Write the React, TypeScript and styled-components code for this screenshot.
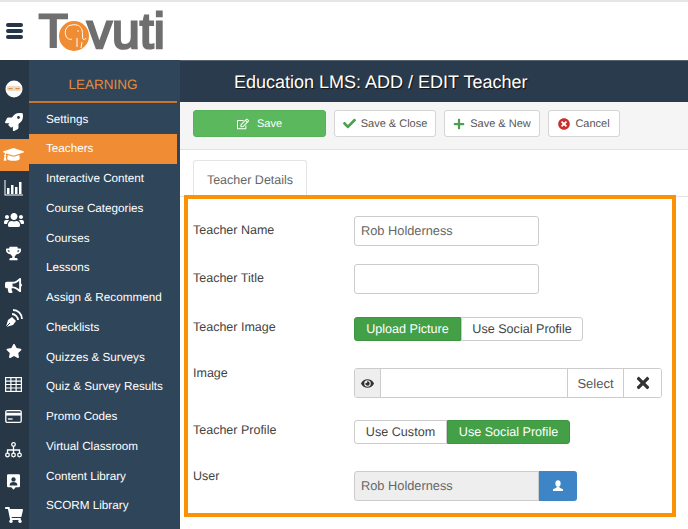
import React from "react";
import styled, { createGlobalStyle } from "styled-components";
import {
  FaRocket, FaGraduationCap, FaUsers, FaTrophy, FaBullhorn, FaStar,
  FaShoppingCart, FaCheck, FaPlus, FaTimes, FaTimesCircle, FaEye, FaRegEdit,
} from "react-icons/fa";

const Global = createGlobalStyle`
  html, body { margin: 0; padding: 0; background: #fff; overflow: hidden; }
  * { box-sizing: border-box; }
  body { font-family: "Liberation Sans", Arial, sans-serif; color: #555; text-rendering: geometricPrecision; }
`;

const Page = styled.div`
  width: 688px;
  height: 529px;
  display: flex;
  flex-direction: column;
  overflow: hidden;
`;
const Header = styled.header`
  height: 60px;
  flex: none;
  border-top: 2px solid #e6e6e6;
  display: flex;
  align-items: center;
  padding-left: 6px;
  background: #fff;
`;
const Burger = styled.div`
  width: 17px;
  height: 16px;
  display: flex;
  flex-direction: column;
  justify-content: space-between;
  span {
    height: 4px;
    border-radius: 2px;
    background: #24364a;
  }
`;
const Logo = styled.div`
  margin-left: 15px;
  display: flex;
  align-items: center;
  height: 40px;
  font-size: 50px;
  color: #6f6f6f;
  line-height: 40px;
`;
const LogoT = styled.span`
  font-weight: 700;
  letter-spacing: -1.5px;
`;
const LogoRest = styled.span`
  font-weight: 400;
  letter-spacing: 0;
  -webkit-text-stroke: 2.4px #6f6f6f;
`;
const LogoCircle = styled.svg`
  width: 30px;
  height: 30px;
  margin: 10px -2px 0 -8px;
  flex: none;
`;
const Body = styled.div`
  flex: 1;
  display: flex;
  min-height: 0;
`;
const Rail = styled.nav`
  width: 29px;
  flex: none;
  background: #273746;
  display: flex;
  flex-direction: column;
  align-items: center;
  padding-top: 13px;
`;
const RailItem = styled.div<{ $active?: boolean }>`
  width: 29px;
  height: 32.75px;
  flex: none;
  display: flex;
  align-items: center;
  justify-content: center;
  padding-right: 2px;
  color: #fff;
  font-size: 18px;
  background: ${(p) => (p.$active ? "#ef8c34" : "transparent")};
`;
const Nav = styled.nav`
  width: 151px;
  flex: none;
  background: #2f4559;
  display: flex;
  flex-direction: column;
`;
const NavTitle = styled.div`
  height: 43px;
  margin-right: 3px;
  border-bottom: 2px solid #c9742d;
  color: #e98a3a;
  font-size: 13.5px;
  text-align: center;
  line-height: 50px;
`;
const NavList = styled.div`
  padding-top: 1.5px;
  display: flex;
  flex-direction: column;
`;
const NavItem = styled.div<{ $active?: boolean }>`
  height: 29.75px;
  line-height: 29px;
  padding-left: 17px;
  margin-right: 3px;
  font-size: 11.7px;
  color: #fff;
  background: ${(p) => (p.$active ? "#ef8c34" : "transparent")};
`;
const Main = styled.main`
  flex: 1;
  min-width: 0;
  display: flex;
  flex-direction: column;
`;
const TitleBar = styled.div`
  height: 42px;
  flex: none;
  background: #2a3b4d;
  border-top: 1px solid #56636f;
  color: #fff;
  font-size: 18px;
  line-height: 42px;
  padding-left: 54px;
  text-shadow: 1px 1px 1px #111;
`;
const Toolbar = styled.div`
  height: 48px;
  flex: none;
  background: #f5f5f5;
  border-bottom: 1px solid #e2e2e2;
  display: flex;
  align-items: flex-start;
  gap: 8px;
  padding: 8px 0 0 13px;
`;
const ToolButton = styled.div<{ $primary?: boolean; $w: number }>`
  width: ${(p) => p.$w}px;
  height: 27px;
  border-radius: 3px;
  border: 1px solid ${(p) => (p.$primary ? "#57b05a" : "#d5d5d5")};
  background: ${(p) => (p.$primary ? "#5cb85c" : "#fff")};
  color: ${(p) => (p.$primary ? "#fff" : "#555")};
  font-size: 11px;
  display: flex;
  align-items: center;
  justify-content: center;
  gap: ${(p) => (p.$primary ? 8 : 5)}px;
  svg { flex: none; }
`;
const Tabs = styled.div`
  height: 47px;
  flex: none;
  padding: 10px 0 0 13px;
  border-bottom: 1px solid #e4e4e4;
`;
const Tab = styled.div`
  width: 114px;
  height: 37px;
  background: #fff;
  border: 1px solid #e4e4e4;
  border-bottom: none;
  border-radius: 3px 3px 0 0;
  font-size: 12.5px;
  color: #666;
  text-align: center;
  line-height: 38px;
`;
const FormBox = styled.section`
  position: relative;
  margin: -2px 0 0 4px;
  width: 492px;
  height: 322px;
  border: 4px solid #fb9205;
  background: #fff;
  padding: 17px 0 0 5px;
  display: flex;
  flex-direction: column;
`;
const Row = styled.div<{ $gap?: number }>`
  display: grid;
  grid-template-columns: 161px auto;
  justify-content: start;
  align-items: start;
  margin-top: ${(p) => p.$gap ?? 0}px;
`;
const Label = styled.label<{ $drop?: number }>`
  font-size: 12.5px;
  color: #444;
  line-height: 16px;
  margin-top: ${(p) => p.$drop ?? 0}px;
`;
const TextBox = styled.div<{ $disabled?: boolean }>`
  width: 185px;
  height: 30px;
  border: 1px solid #ccc;
  border-radius: ${(p) => (p.$disabled ? "3px 0 0 3px" : "3px")};
  background: ${(p) => (p.$disabled ? "#eee" : "#fff")};
  font-size: 12.8px;
  line-height: 28px;
  padding-left: 6px;
  color: #666;
`;
const Toggle = styled.div`
  display: flex;
  height: 24px;
`;
const ToggleButton = styled.div<{ $on?: boolean; $w: number; $side: "l" | "r" }>`
  width: ${(p) => p.$w}px;
  height: 24px;
  font-size: 12.6px;
  line-height: 23px;
  text-align: center;
  color: ${(p) => (p.$on ? "#fff" : "#444")};
  background: ${(p) => (p.$on ? "#43a047" : "#fff")};
  border: 1px solid ${(p) => (p.$on ? "#3d9441" : "#ccc")};
  border-radius: ${(p) => (p.$side === "l" ? "3px 0 0 3px" : "0 3px 3px 0")};
`;
const InputGroup = styled.div`
  display: flex;
  width: 308px;
  height: 30px;
  border: 1px solid #ccc;
  border-radius: 3px;
  overflow: hidden;
`;
const Addon = styled.div<{ $w: number; $grey?: boolean; $fill?: boolean }>`
  width: ${(p) => (p.$fill ? "auto" : `${p.$w}px`)};
  flex: ${(p) => (p.$fill ? 1 : "none")};
  background: ${(p) => (p.$grey ? "#eee" : "#fff")};
  border-right: 1px solid #ccc;
  display: flex;
  align-items: center;
  justify-content: center;
  font-size: 13px;
  color: #555;
  &:last-child { border-right: none; }
`;
const UserRow = styled.div`
  display: flex;
`;
const UserButton = styled.div`
  width: 38px;
  height: 30px;
  background: #3d85c6;
  border-radius: 0 3px 3px 0;
  display: flex;
  align-items: center;
  justify-content: center;
`;

const Ninja = () => (
  <svg width="18" height="18" viewBox="0 0 18 18">
    <circle cx="9" cy="9" r="8.500" fill="#fff" />
    <rect x="1.500" y="6" width="15" height="5" rx="2.500" fill="#ecdcc8" />
    <rect x="3.500" y="8" width="4" height="1.200" fill="#e58a36" />
    <rect x="10.500" y="8" width="4" height="1.200" fill="#e58a36" />
  </svg>
);
const BarsChart = () => (
  <svg width="19" height="16" viewBox="0 0 19 16" fill="#fff">
    <path d="M0.500 0v15.500H19v-1H1.500V0z" />
    <rect x="3" y="8" width="2.500" height="6" />
    <rect x="7" y="5" width="2.500" height="9" />
    <rect x="11" y="7" width="2.500" height="7" />
    <rect x="15" y="2" width="2.500" height="12" />
  </svg>
);
const PenSignal = () => (
  <svg width="18" height="19" viewBox="0 0 18 19" fill="none" stroke="#fff">
    <path d="M1 18l2-7 4-3 4 4-3 4z" fill="#fff" stroke="none" />
    <path d="M1 18l4-4" stroke="#273746" strokeWidth="1" />
    <path d="M7 5c3 0 6 3 6 6" strokeWidth="1.800" />
    <path d="M8 1c5 0 9 4 9 9" strokeWidth="1.800" />
  </svg>
);
const GridTable = () => (
  <svg width="17" height="15" viewBox="0 0 17 15" fill="none" stroke="#fff" strokeWidth="1.200">
    <rect x="0.600" y="0.600" width="15.800" height="13.800" fill="#273746" />
    <path d="M5.900 0.600v13.800M11.100 0.600v13.800M0.600 4.100h15.800M0.600 7.500h15.800M0.600 11h15.800" />
  </svg>
);
const Card = () => (
  <svg width="17" height="13" viewBox="0 0 18 14">
    <rect x="0.700" y="0.700" width="16.600" height="12.600" rx="1.500" fill="none" stroke="#fff" strokeWidth="1.400" />
    <rect x="1" y="3" width="16" height="3" fill="#fff" />
    <rect x="3" y="9" width="5" height="1.400" fill="#fff" />
  </svg>
);
const Sitemap = () => (
  <svg width="17" height="16" viewBox="0 0 17 16" fill="none" stroke="#fff" strokeWidth="1.300">
    <circle cx="8.500" cy="2.500" r="1.800" />
    <circle cx="2.500" cy="13" r="1.800" />
    <circle cx="8.500" cy="13" r="1.800" />
    <circle cx="14.500" cy="13" r="1.800" />
    <path d="M8.500 4.300v6.900M2.500 11.200V8h12v3.200" />
  </svg>
);
const Portrait = () => (
  <svg width="13" height="16" viewBox="0 0 15 18" fill="#fff">
    <path d="M1.500 0h12A1.500 1.500 0 0 1 15 1.500v12a1.500 1.500 0 0 1-1.500 1.500H10l-2.500 3L5 15H1.500A1.500 1.500 0 0 1 0 13.500v-12A1.500 1.500 0 0 1 1.500 0z" />
    <circle cx="7.500" cy="6" r="2.500" fill="#273746" />
    <path d="M3 13c0-3 2-4 4.500-4s4.500 1 4.500 4z" fill="#273746" />
  </svg>
);
const Person = () => (
  <svg width="12" height="12" viewBox="0 0 12 12" fill="#fff">
    <ellipse cx="6" cy="3.400" rx="2.600" ry="3.200" />
    <path d="M4.700 6.500h2.600l.3 1.300 3.400 1.400v1.800H1V9.200l3.400-1.400z" />
  </svg>
);

const navItems = [
  "Settings", "Teachers", "Interactive Content", "Course Categories", "Courses", "Lessons",
  "Assign & Recommend", "Checklists", "Quizzes & Surveys", "Quiz & Survey Results",
  "Promo Codes", "Virtual Classroom", "Content Library", "SCORM Library",
];

export default function App() {
  return (
    <Page>
      <Global />
      <Header>
        <Burger><span /><span /><span /></Burger>
        <Logo>
          <LogoT>T</LogoT>
          <LogoCircle viewBox="0 0 30 30">
            <circle cx="15" cy="15" r="15" fill="#ef8c34" />
            <path d="M13 4c-6 0-8 7-6 11 1 3 4 4 6 3M13 4c5-1 9 1 10 5 1 3 0 7 1 9 1 1 2 1 3-1M18 17v9M23 21l-1 6" fill="none" stroke="#fff" strokeWidth="1" />
            <circle cx="19" cy="10" r="0.800" fill="#fff" />
          </LogoCircle>
          <LogoRest>vuti</LogoRest>
        </Logo>
      </Header>
      <Body>
        <Rail>
          <RailItem><Ninja /></RailItem>
          <RailItem><FaRocket /></RailItem>
          <RailItem $active><FaGraduationCap size={21} /></RailItem>
          <RailItem><BarsChart /></RailItem>
          <RailItem><FaUsers size={20} /></RailItem>
          <RailItem><FaTrophy size={15} /></RailItem>
          <RailItem><FaBullhorn size={17} /></RailItem>
          <RailItem><PenSignal /></RailItem>
          <RailItem><FaStar size={16} /></RailItem>
          <RailItem><GridTable /></RailItem>
          <RailItem><Card /></RailItem>
          <RailItem><Sitemap /></RailItem>
          <RailItem><Portrait /></RailItem>
          <RailItem><FaShoppingCart size={18} /></RailItem>
        </Rail>
        <Nav>
          <NavTitle>LEARNING</NavTitle>
          <NavList>
            {navItems.map((n) => (
              <NavItem key={n} $active={n === "Teachers"}>{n}</NavItem>
            ))}
          </NavList>
        </Nav>
        <Main>
          <TitleBar>Education LMS: ADD / EDIT Teacher</TitleBar>
          <Toolbar>
            <ToolButton $primary $w={133}><FaRegEdit size={12} />Save</ToolButton>
            <ToolButton $w={102}><FaCheck size={13} color="#4aa04e" />Save &amp; Close</ToolButton>
            <ToolButton $w={96}><FaPlus size={12} color="#4aa04e" />Save &amp; New</ToolButton>
            <ToolButton $w={72}><FaTimesCircle size={12} color="#c9302c" />Cancel</ToolButton>
          </Toolbar>
          <Tabs><Tab>Teacher Details</Tab></Tabs>
          <FormBox>
            <Row>
              <Label $drop={6}>Teacher Name</Label>
              <TextBox>Rob Holderness</TextBox>
            </Row>
            <Row $gap={18}>
              <Label $drop={6}>Teacher Title</Label>
              <TextBox />
            </Row>
            <Row $gap={23}>
              <Label $drop={2}>Teacher Image</Label>
              <Toggle>
                <ToggleButton $on $side="l" $w={107}>Upload Picture</ToggleButton>
                <ToggleButton $side="r" $w={122}>Use Social Profile</ToggleButton>
              </Toggle>
            </Row>
            <Row $gap={27}>
              <Label $drop={-3}>Image</Label>
              <InputGroup>
                <Addon $w={26} $grey><FaEye size={13} color="#333" /></Addon>
                <Addon $w={0} $fill />
                <Addon $w={56}>Select</Addon>
                <Addon $w={37}><FaTimes size={18} color="#333" /></Addon>
              </InputGroup>
            </Row>
            <Row $gap={22}>
              <Label $drop={2}>Teacher Profile</Label>
              <Toggle>
                <ToggleButton $side="l" $w={93}>Use Custom</ToggleButton>
                <ToggleButton $on $side="r" $w={123}>Use Social Profile</ToggleButton>
              </Toggle>
            </Row>
            <Row $gap={27}>
              <Label $drop={-3}>User</Label>
              <UserRow>
                <TextBox $disabled>Rob Holderness</TextBox>
                <UserButton><Person /></UserButton>
              </UserRow>
            </Row>
          </FormBox>
        </Main>
      </Body>
    </Page>
  );
}
